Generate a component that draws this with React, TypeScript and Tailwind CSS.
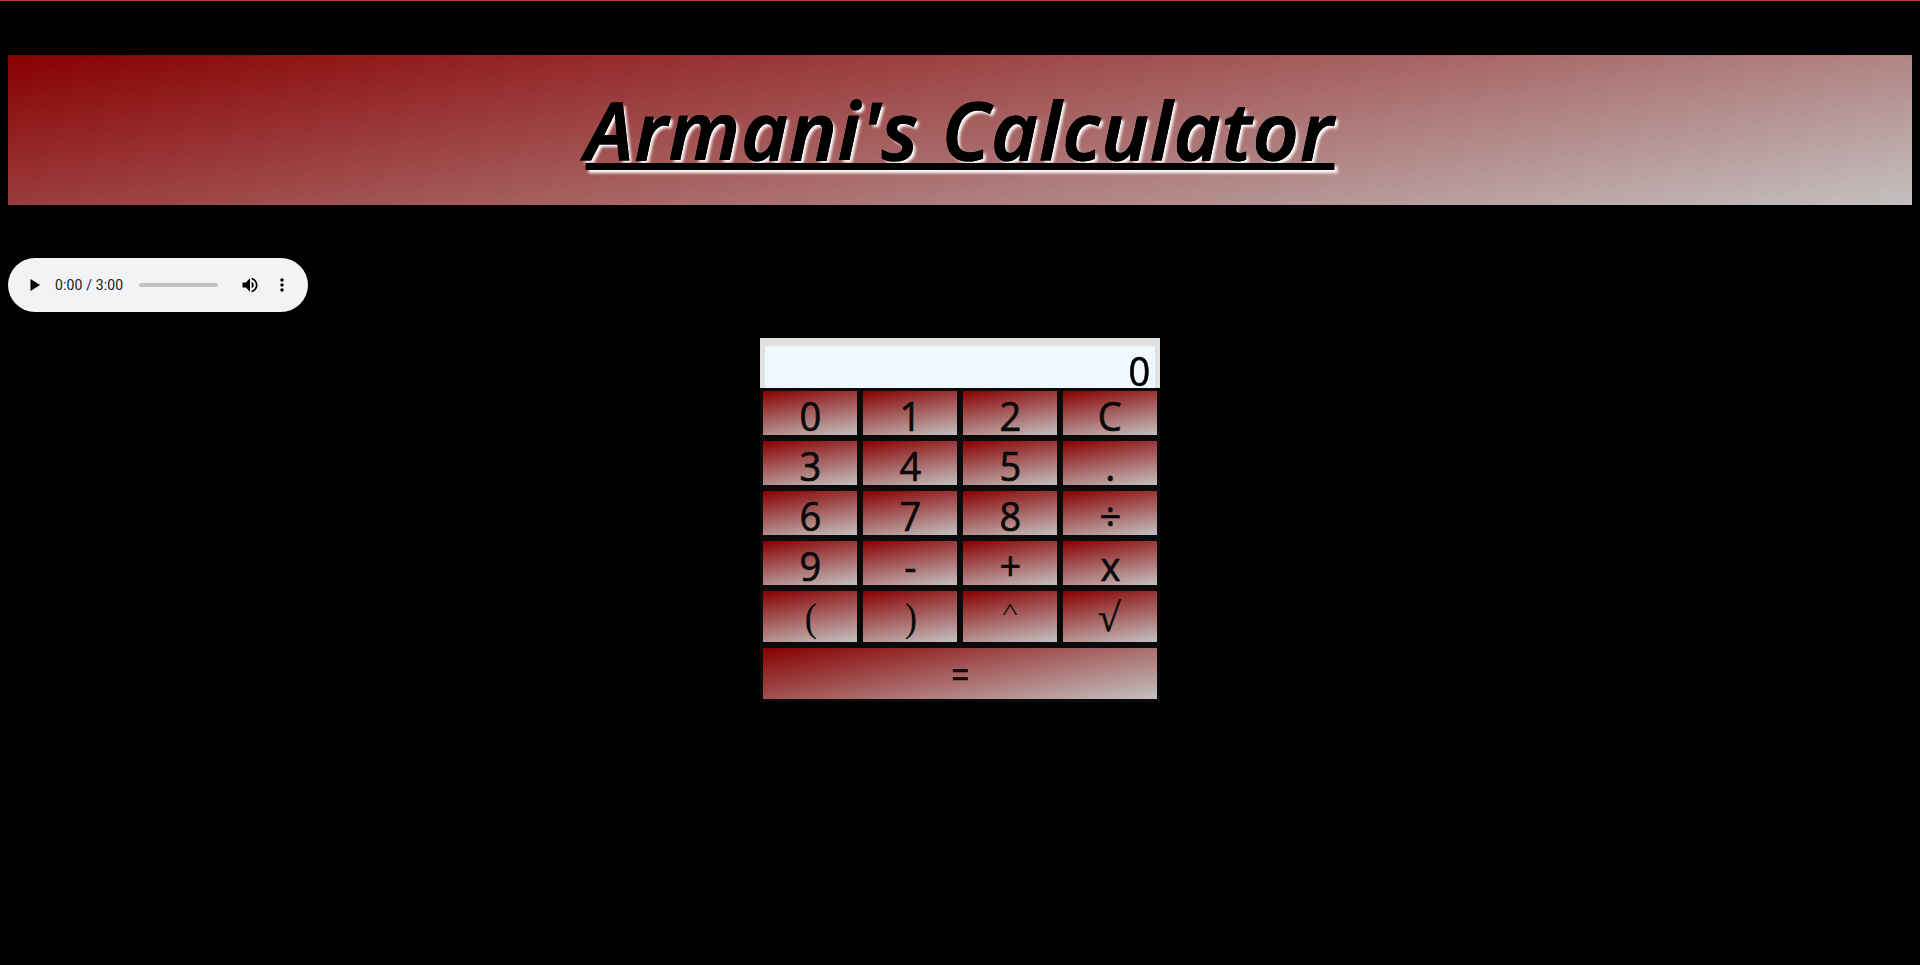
const keys: string[] = ["0", "1", "2", "C", "3", "4", "5", ".", "6", "7", "8", "÷", "9", "-", "+", "x"];

const symbols: { label: string; glyph: string }[] = [
  { label: "(", glyph: "translate-x-[1px] translate-y-[1px] scale-x-90 text-[41px] font-['Liberation_Serif',serif]" },
  { label: ")", glyph: "translate-x-[1px] translate-y-[1px] scale-x-90 text-[41px] font-['Liberation_Serif',serif]" },
  { label: "^", glyph: "-translate-y-[6px] scale-y-75 text-[32px] font-['Liberation_Serif',serif]" },
  { label: "√", glyph: "-translate-x-[1px] translate-y-[1px] -skew-x-3 font-['Liberation_Serif',serif] [-webkit-text-stroke:0.5px_#0a0a0a]" },
];

const keyStyle =
  "flex items-center justify-center border-[3px] border-[#0a0a0a] bg-[linear-gradient(170deg,#880000,#c4c0c0)] text-[40px] leading-none text-[#0a0a0a]";

function Player() {
  return (
    <div className="flex h-[54px] w-[300px] items-center rounded-full bg-[#f1f3f4]">
      <svg className="ml-[22px] h-3 w-[10px]" viewBox="0 0 10 12" fill="#000">
        <path d="M0.5 0v12l9.5-6z" />
      </svg>
      <span className="ml-[15px] w-[70px] whitespace-nowrap font-['Roboto',sans-serif] text-[14px] leading-none tracking-[0.15px] text-[#202124]">
        0:00 / 3:00
      </span>
      <div className="ml-[14px] h-1 w-[79px] rounded-full bg-[#c1c2c3]" />
      <svg className="ml-[22px] h-5 w-5" viewBox="0 0 24 24" fill="#000">
        <path d="M3 9v6h4l5 5V4L7 9H3zm13.5 3c0-1.77-1.02-3.29-2.5-4.03v8.05c1.48-.73 2.5-2.25 2.5-4.02zM14 3.23v2.06c2.89.86 5 3.54 5 6.71s-2.11 5.85-5 6.71v2.06c4.01-.91 7-4.49 7-8.77s-2.99-7.86-7-8.77z" />
      </svg>
      <svg className="ml-[12px] h-5 w-5" viewBox="0 0 24 24" fill="#000">
        <path d="M12 8c1.1 0 2-.9 2-2s-.9-2-2-2-2 .9-2 2 .9 2 2 2zm0 2c-1.1 0-2 .9-2 2s.9 2 2 2 2-.9 2-2-.9-2-2-2zm0 6c-1.1 0-2 .9-2 2s.9 2 2 2 2-.9 2-2-.9-2-2-2z" />
      </svg>
    </div>
  );
}

export default function App() {
  return (
    <div className="flex h-[965px] flex-col border-t border-[#b83c3c] bg-black px-2 pt-[54px] font-['Open_Sans',sans-serif]">
      <h1 className="flex h-[150px] shrink-0 items-center justify-center bg-[linear-gradient(170deg,#880000,#c4c0c0)] pb-[2px]">
        <span className="whitespace-nowrap text-[80px] leading-none font-semibold tracking-[1.5px] text-black italic underline decoration-[7px] underline-offset-[3px] [-webkit-text-stroke:1.2px_#000] [text-decoration-skip-ink:none] [text-shadow:3px_3px_3px_#fff]">
          Armani's Calculator
        </span>
      </h1>
      <div className="mt-[53px]">
        <Player />
      </div>
      <div className="mx-auto mt-[26px] w-[400px]">
        <div className="flex h-[50px] items-start justify-end border-x-[5px] border-t-8 border-[#e1e1e1] bg-[#f0f8ff] pr-[4px] text-[40px] leading-[50px] text-black">
          <span className="scale-x-95 [-webkit-text-stroke:0.7px_#000]">0</span>
        </div>
        <div className="grid grid-cols-4 auto-rows-[50px]">
          {keys.map((label) => (
            <button key={label} className={keyStyle}>
              <span className="translate-y-[3px] scale-x-95 [-webkit-text-stroke:0.7px_#0a0a0a]">{label}</span>
            </button>
          ))}
        </div>
        <div className="grid grid-cols-4 auto-rows-[57px]">
          {symbols.map((k) => (
            <button key={k.label} className={keyStyle}>
              <span className={k.glyph}>{k.label}</span>
            </button>
          ))}
          <button className={keyStyle + " col-span-4"}>
            <span className="scale-x-80 [-webkit-text-stroke:0.5px_#0a0a0a]">=</span>
          </button>
        </div>
      </div>
    </div>
  );
}
